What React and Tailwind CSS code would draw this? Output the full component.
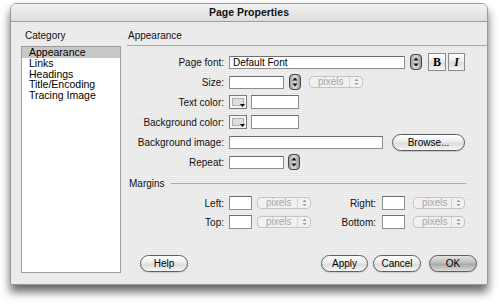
import React from 'react'

// Mac OS X "Page Properties" dialog
const pinstripe =
  'bg-[repeating-linear-gradient(to_bottom,#efefef_0px,#efefef_1px,#e7e7e7_1px,#e7e7e7_2px)]'
const aqua =
  'bg-[linear-gradient(to_bottom,#ffffff,#ececec_45%,#dcdcdc_55%,#f6f6f6)]'

function Stepper() {
  return (
    <svg width="12" height="16" viewBox="0 0 12 16" className="shrink-0">
      <defs>
        <linearGradient id="stp" x1="0" y1="0" x2="1" y2="0">
          <stop offset="0" stopColor="#9c9c9c" />
          <stop offset="0.5" stopColor="#dcdcdc" />
          <stop offset="1" stopColor="#969696" />
        </linearGradient>
      </defs>
      <rect x="0.5" y="0.5" width="11" height="15" rx="3.5" fill="url(#stp)" stroke="#444" />
      <path d="M3.5 6.5 L6 3.5 L8.5 6.5 Z" fill="#111" />
      <path d="M3.5 9.5 L6 12.5 L8.5 9.5 Z" fill="#111" />
    </svg>
  )
}

function Pixels({ w = 'w-[54px]' }) {
  return (
    <div className={`${w} h-[12px] shrink-0 flex items-center rounded-[4px] border border-[#c4c4c4] bg-[#f1f1f1] text-[#a6a6a6]`}>
      <span className="flex-1 pl-[8px] text-[10px] leading-none">pixels</span>
      <span className="w-[13px] h-full flex flex-col items-center justify-center gap-[1px] border-l border-[#d4d4d4]">
        <svg width="5" height="8" viewBox="0 0 5 8">
          <path d="M0.5 3 L2.5 0.8 L4.5 3 Z" fill="#999" />
          <path d="M0.5 5 L2.5 7.2 L4.5 5 Z" fill="#999" />
        </svg>
      </span>
    </div>
  )
}

function Field({ w, h = 'h-[13px]', children }) {
  return (
    <div className={`${w} ${h} shrink-0 bg-white border border-[#8e8e8e] border-t-[#6e6e6e] flex items-center pl-[3px] text-[10px] text-black`}>
      {children}
    </div>
  )
}

function Swatch() {
  return (
    <div className="relative w-[18px] h-[14px] shrink-0 border border-[#7a7a7a] bg-[#f4f4f4] p-[2px]">
      <div className="w-full h-full bg-[#dedede] border border-[#b0b0b0]" />
      <svg width="5" height="3" viewBox="0 0 5 3" className="absolute right-[1px] bottom-[1px]">
        <path d="M0 0 L5 0 L2.5 3 Z" fill="#000" />
      </svg>
    </div>
  )
}

function Button({ children, w = 'w-[48px]', def = false }) {
  return (
    <div
      className={`${w} h-[17px] rounded-full border border-[#5e5e5e] flex items-center justify-center text-[10px] text-black shadow-[0_1px_1px_rgba(0,0,0,0.15)] ${
        def
          ? 'bg-[linear-gradient(to_bottom,#e2e2e2,#bdbdbd_45%,#a9a9a9_55%,#dadada)]'
          : aqua
      }`}
    >
      {children}
    </div>
  )
}

function Row({ label, children, h = 'h-[20px]' }) {
  return (
    <div className={`${h} flex items-center`}>
      <span className="w-[98px] text-right pr-[1px] text-[10px] text-[#111]">{label}</span>
      <div className="ml-[4px] flex items-center">{children}</div>
    </div>
  )
}

const categories = ['Appearance', 'Links', 'Headings', 'Title/Encoding', 'Tracing Image']

export default function App() {
  return (
    <div className="w-[500px] h-[305px] bg-white font-['Liberation_Sans',Arial,sans-serif] pt-[3px] pl-[10px]">
      <div className={`w-[478px] h-[282px] flex flex-col rounded-t-[6px] border border-[#9a9a9a] overflow-hidden shadow-[0_7px_10px_rgba(0,0,0,0.6)] ${pinstripe}`}>
        {/* title bar */}
        <div className="h-[18px] shrink-0 flex items-center justify-center border-b border-[#9c9c9c] bg-[linear-gradient(to_bottom,#f2f2f2,#dedede)]">
          <span className="text-[10.5px] font-bold text-[#111]">Page Properties</span>
        </div>

        <div className="flex-1 flex">
          {/* category list */}
          <div className="w-[110px] pl-[10px] pt-[8px] pb-[11px] flex flex-col">
            <div className="h-[12px] pl-[4px] text-[10px] leading-[12px] text-[#111]">Category</div>
            <div className="mt-[4px] flex-1 bg-white border border-[#9e9e9e]">
              {categories.map((c, i) => (
                <div
                  key={c}
                  className={`h-[10.75px] pl-[7px] text-[10.5px] leading-[10.75px] text-black ${i === 0 ? 'bg-[#c8c8c8]' : ''}`}
                >
                  {c}
                </div>
              ))}
            </div>
          </div>

          {/* panel */}
          <div className="flex-1 ml-[6px] flex flex-col">
            <div className="pt-[8px] pb-[3px] pl-[1px] border-b border-[#a4a4a4]">
              <div className="h-[12px] text-[10px] leading-[12px] text-[#111]">Appearance</div>
            </div>

            <div className="mt-[6px] pr-[11px]">
              <Row label="Page font:">
                <Field w="w-[176px]">Default Font</Field>
                <span className="ml-[5px]"><Stepper /></span>
                <div className={`ml-[6px] w-[18px] h-[18px] border border-[#8a8a8a] flex items-center justify-center font-['Liberation_Serif',serif] font-bold text-[12px] ${aqua}`}>B</div>
                <div className={`ml-[2px] w-[17px] h-[18px] border border-[#8a8a8a] flex items-center justify-center font-['Liberation_Serif',serif] font-bold italic text-[12px] ${aqua}`}>I</div>
              </Row>
              <Row label="Size:">
                <Field w="w-[55px]" />
                <span className="ml-[5px]"><Stepper /></span>
                <span className="ml-[8px]"><Pixels /></span>
              </Row>
              <Row label="Text color:">
                <Swatch />
                <span className="ml-[4px]"><Field w="w-[48px]" h="h-[14px]" /></span>
              </Row>
              <Row label="Background color:">
                <Swatch />
                <span className="ml-[4px]"><Field w="w-[48px]" h="h-[14px]" /></span>
              </Row>
              <Row label="Background image:">
                <Field w="w-[154px]" />
                <span className="ml-[9px]"><Button w="w-[73px]">Browse...</Button></span>
              </Row>
              <Row label="Repeat:">
                <Field w="w-[55px]" />
                <span className="ml-[4px]"><Stepper /></span>
              </Row>

              {/* margins */}
              <div className="h-[20px] mt-[1px] flex items-center pr-[10px]">
                <span className="pl-[2px] text-[10px] text-[#111]">Margins</span>
                <div className="ml-[6px] flex-1 h-[1px] bg-[#a8a8a8]" />
              </div>
              {[
                ['Left:', 'Right:', 'h-[20px]'],
                ['Top:', 'Bottom:', 'h-[18px]'],
              ].map(([a, b, h]) => (
                <div key={a} className={`${h} flex items-center`}>
                  <span className="w-[98px] text-right pr-[1px] text-[10px] text-[#111]">{a}</span>
                  <span className="ml-[4px]"><Field w="w-[23px]" h="h-[14px]" /></span>
                  <span className="ml-[5px]"><Pixels /></span>
                  <span className="w-[65px] text-right text-[10px] text-[#111]">{b}</span>
                  <span className="ml-[6px]"><Field w="w-[23px]" h="h-[14px]" /></span>
                  <span className="ml-[8px]"><Pixels w="w-[52px]" /></span>
                </div>
              ))}
            </div>

            {/* buttons */}
            <div className="mt-auto mb-[12px] pl-[13px] pr-[10px] flex items-center">
              <Button>Help</Button>
              <div className="flex-1" />
              <Button w="w-[47px]">Apply</Button>
              <span className="ml-[5px]"><Button>Cancel</Button></span>
              <span className="ml-[8px]"><Button def>OK</Button></span>
            </div>
          </div>
        </div>
      </div>
    </div>
  )
}
